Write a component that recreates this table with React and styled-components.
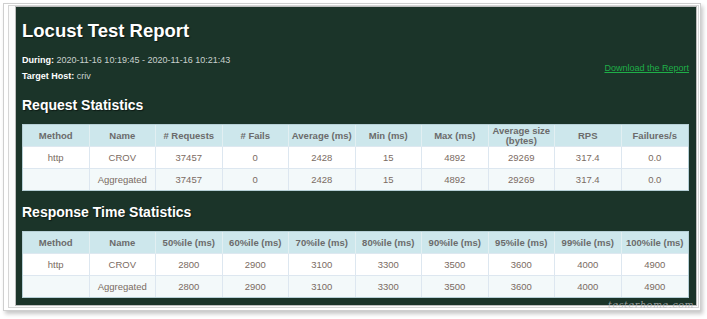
import React from "react";
import styled, { createGlobalStyle } from "styled-components";

const Global = createGlobalStyle`
  html, body { margin: 0; padding: 0; background: #ffffff; }
  body { font-family: "Liberation Sans", Arial, sans-serif; }
`;

const Page = styled.div`
  position: relative;
  width: 707px;
  height: 319px;
  padding: 3px 0 0 3px;
  box-sizing: border-box;
  overflow: hidden;
`;

const Frame = styled.div`
  width: 698px;
  box-sizing: border-box;
  border: 1px solid #cfcfcf;
  padding: 1px 1px 2px 4px;
  background: #ffffff;
  box-shadow: 2px 3px 4px rgba(0, 0, 0, 0.22);
`;

const Mat = styled.div`
  border: 1px solid #d6d6d6;
  padding: 0 1px 1px 6px;
  background: #fbfbfb;
`;

const Panel = styled.div`
  border: 1px solid #bdbdbd;
  background: #1b3429;
  padding: 13px 6px 7px 6px;
`;

const Title = styled.h1`
  margin: 0;
  font-size: 18.5px;
  line-height: 22px;
  font-weight: bold;
  color: #ffffff;
  text-shadow: 1px 1px 1px rgba(0, 0, 0, 0.5);
`;

const InfoRow = styled.div`
  margin-top: 10px;
  display: flex;
  justify-content: space-between;
  align-items: center;
`;

const InfoLines = styled.div`
  display: flex;
  flex-direction: column;
`;

const InfoLine = styled.div`
  font-size: 9px;
  line-height: 16px;
  color: #c9d2cd;
`;

const Label = styled.b`
  color: #ffffff;
`;

const DownloadLink = styled.a`
  font-size: 9px;
  line-height: 16px;
  color: #1fae48;
  text-decoration: underline;
  margin-right: 1px;
`;

const SectionTitle = styled.h2`
  margin: 12px 0 10px 0;
  font-size: 14px;
  line-height: 18px;
  font-weight: bold;
  color: #ffffff;
  text-shadow: 1px 1px 1px rgba(0, 0, 0, 0.5);
`;

const Table = styled.table`
  width: 667px;
  table-layout: fixed;
  border-collapse: separate;
  border-spacing: 0;
  border: 1px solid #b6cfd6;
  background: #ffffff;
`;

const HeadCell = styled.th`
  height: 21px;
  padding: 0 2px;
  background: #cde7ec;
  color: #6b6b6b;
  font-size: 9.5px;
  line-height: 10px;
  font-weight: bold;
  text-align: center;
  border-right: 1px solid #e2eff2;
  border-bottom: 1px solid #dde8f0;
  &:last-child { border-right: none; }
`;

const Row = styled.tr`
  background: ${(p) => (p.$alt ? "#f3f9fa" : "#ffffff")};
`;

const Cell = styled.td`
  height: 21px;
  padding: 0 2px;
  color: #7a6b62;
  font-size: 9.5px;
  text-align: center;
  border-right: 1px solid #dde7f0;
  border-bottom: ${(p) => (p.$last ? "none" : "1px solid #dde7f0")};
  &:last-child { border-right: none; }
`;

const Watermark = styled.div`
  position: absolute;
  left: 608px;
  top: 299px;
  font-family: "DejaVu Serif", serif;
  font-style: italic;
  font-size: 9.5px;
  letter-spacing: 0.6px;
  color: rgba(185, 185, 185, 0.8);
  pointer-events: none;
  white-space: nowrap;
`;

const requestHeads = [
  "Method",
  "Name",
  "# Requests",
  "# Fails",
  "Average (ms)",
  "Min (ms)",
  "Max (ms)",
  "Average size (bytes)",
  "RPS",
  "Failures/s",
];

const requestRows = [
  ["http", "CROV", "37457", "0", "2428", "15", "4892", "29269", "317.4", "0.0"],
  ["", "Aggregated", "37457", "0", "2428", "15", "4892", "29269", "317.4", "0.0"],
];

const responseHeads = [
  "Method",
  "Name",
  "50%ile (ms)",
  "60%ile (ms)",
  "70%ile (ms)",
  "80%ile (ms)",
  "90%ile (ms)",
  "95%ile (ms)",
  "99%ile (ms)",
  "100%ile (ms)",
];

const responseRows = [
  ["http", "CROV", "2800", "2900", "3100", "3300", "3500", "3600", "4000", "4900"],
  ["", "Aggregated", "2800", "2900", "3100", "3300", "3500", "3600", "4000", "4900"],
];

function StatsTable({ heads, rows }) {
  return (
    <Table>
      <thead>
        <tr>
          {heads.map((h) => (
            <HeadCell key={h}>{h}</HeadCell>
          ))}
        </tr>
      </thead>
      <tbody>
        {rows.map((r, i) => (
          <Row key={i} $alt={i % 2 === 1}>
            {r.map((c, j) => (
              <Cell key={j} $last={i === rows.length - 1}>
                {c}
              </Cell>
            ))}
          </Row>
        ))}
      </tbody>
    </Table>
  );
}

export default function App() {
  return (
    <Page>
      <Global />
      <Frame>
        <Mat>
          <Panel>
            <Title>Locust Test Report</Title>
            <InfoRow>
              <InfoLines>
                <InfoLine>
                  <Label>During:</Label> 2020-11-16 10:19:45 - 2020-11-16 10:21:43
                </InfoLine>
                <InfoLine>
                  <Label>Target Host:</Label> criv
                </InfoLine>
              </InfoLines>
              <DownloadLink href="#">Download the Report</DownloadLink>
            </InfoRow>
            <SectionTitle>Request Statistics</SectionTitle>
            <StatsTable heads={requestHeads} rows={requestRows} />
            <SectionTitle>Response Time Statistics</SectionTitle>
            <StatsTable heads={responseHeads} rows={responseRows} />
          </Panel>
        </Mat>
      </Frame>
      <Watermark>testerhome.com</Watermark>
    </Page>
  );
}
